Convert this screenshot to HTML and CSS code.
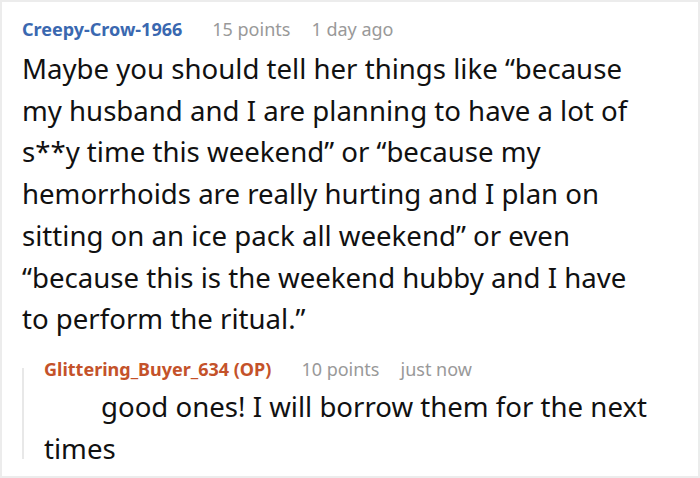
FILE: index.html
```html
<!DOCTYPE html>
<html>
<head>
    <title>Comment</title>
    <meta name="viewport" content="width=device-width, initial-scale=1">
    <link rel="stylesheet" href="styles.css">
</head>
<body>
    <div class="thread">
        <div class="comment">
            <div class="meta">
                <span class="author">Creepy-Crow-1966</span>
                <span class="points">15 points</span>
                <span class="time">1 day ago</span>
            </div>
            <p class="body">Maybe you should tell her things like “because my husband and I are planning to have a lot of s**y time this weekend” or “because my hemorrhoids are really hurting and I plan on sitting on an ice pack all weekend” or even “because this is the weekend hubby and I have to perform the ritual.”</p>
        </div>
        <div class="reply">
            <div class="meta">
                <span class="author op">Glittering_Buyer_634 (OP)</span>
                <span class="points">10 points</span>
                <span class="time">just now</span>
            </div>
            <p class="body indented">good ones! I will borrow them for the next times</p>
        </div>
    </div>
</body>
</html>
```

FILE: styles.css
```css
* {
    margin: 0;
    padding: 0;
    box-sizing: border-box;
}

body {
    background: #ffffff;
    font-family: 'Noto Sans', sans-serif;
    color: #111;
}

.thread {
    width: 700px;
    height: 478px;
    border: 2px solid #ececec;
    padding: 15px 50px 0 20px;
}

.meta {
    display: flex;
    font-size: 18px;
    line-height: 24px;
}

.author {
    color: #3a68b0;
    font-weight: 700;
    margin-right: 30px;
}

.author.op {
    color: #c4522a;
}

.points {
    color: #999;
    margin-right: 21px;
}

.time {
    color: #999;
}

.body {
    font-size: 27.6px;
    line-height: 41.7px;
    margin-top: 7px;
}

.reply {
    margin-top: 17px;
    padding-left: 22px;
    background: linear-gradient(#e8e8e8, #e8e8e8) no-repeat 0 11px / 2px calc(100% - 21px);
}

.reply .body {
    margin-top: 5px;
}

.indented {
    text-indent: 57px;
}
```
